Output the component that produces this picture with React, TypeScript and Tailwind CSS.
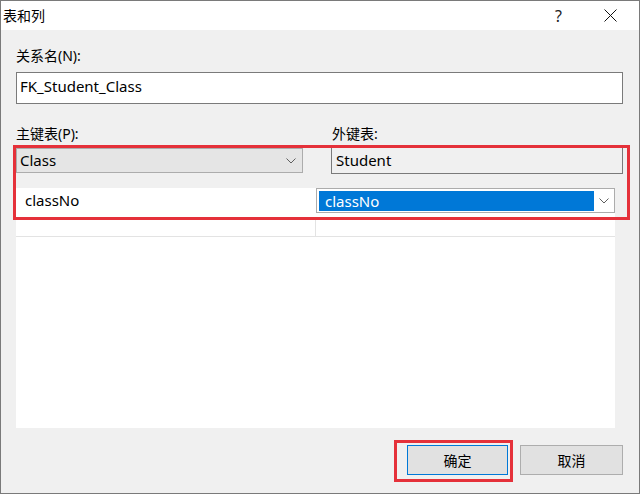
import React from "react";

const font = {
  fontFamily: '"Segoe UI", "Noto Sans", "Noto Sans CJK SC", sans-serif',
};

function Chevron() {
  return (
    <svg width="10" height="6" viewBox="0 0 10 6" fill="none">
      <path d="M0.5 0.5 L5 5 L9.5 0.5" stroke="#5f5f5f" strokeWidth="1" />
    </svg>
  );
}

export default function App() {
  return (
    <div
      style={font}
      className="relative w-[640px] h-[494px] flex flex-col border border-[#7a7a7a] bg-[#f0f0f0] text-[#000] overflow-hidden"
    >
      {/* title bar */}
      <div className="h-[29px] shrink-0 bg-white flex items-center pl-[2px] pr-[22px]">
        <span className="text-[14px] leading-none">表和列</span>
        <div className="ml-auto flex items-center gap-[42px]">
          <span className="text-[16px] leading-none text-[#222]">?</span>
          <svg width="13" height="13" viewBox="0 0 13 13">
            <path d="M0.5 0.5 L12.5 12.5 M12.5 0.5 L0.5 12.5" stroke="#111" strokeWidth="1" />
          </svg>
        </div>
      </div>

      {/* body */}
      <div className="flex-1 flex flex-col pl-[15px] pr-[16px] pt-[16px]">
        <div className="text-[14px] leading-[20px]">关系名(N):</div>
        <div className="mt-[6px] h-[32px] bg-white border border-[#7a7a7a] flex items-center pl-[3px] pb-[4px] text-[15px]">
          FK_Student_Class
        </div>

        <div className="mt-[20px] flex text-[14px] leading-[20px]">
          <div className="w-[316px]">主键表(P):</div>
          <div>外键表:</div>
        </div>

        <div className="mt-[3px] flex items-start">
          <div className="mt-[1px] w-[287px] h-[25px] bg-[#e5e5e5] border border-[#acacac] flex items-center pl-[3px] pr-[6px] text-[15px]">
            <span>Class</span>
            <span className="ml-auto">
              <Chevron />
            </span>
          </div>
          <div className="ml-[28px] flex-1 h-[27px] bg-[#f0f0f0] border border-[#7a7a7a] flex items-center pl-[4px] text-[15px]">
            Student
          </div>
        </div>

        {/* grid */}
        <div className="mt-[14px] w-[599px] h-[240px] bg-white flex flex-col">
          <div className="h-[31px] flex border-b border-[#e3e3e3]">
            <div className="w-[300px] flex items-start pt-[2px] pl-[9px] text-[15px] leading-[21px]">
              classNo
            </div>
            <div className="flex-1 h-[25px] border border-[#acacac] flex items-center bg-white">
              <div className="ml-[2px] w-[275px] h-[20px] bg-[#0078d7] text-white text-[15px] leading-[20px] pl-[6px]">
                classNo
              </div>
              <span className="ml-auto mr-[5px]">
                <Chevron />
              </span>
            </div>
          </div>
          <div className="h-[18px] flex border-b border-[#e3e3e3]">
            <div className="w-[300px] border-r border-[#e3e3e3]"></div>
            <div className="flex-1"></div>
          </div>
        </div>

        {/* buttons */}
        <div className="mt-[17px] flex justify-end gap-[12px] text-[14px]">
          <button className="w-[101px] h-[30px] bg-[#e1e1e1] border border-[#0078d7] flex items-center justify-center">
            确定
          </button>
          <button className="w-[103px] h-[30px] bg-[#e1e1e1] border border-[#adadad] flex items-center justify-center">
            取消
          </button>
        </div>
      </div>

      {/* red annotation boxes */}
      <div className="absolute left-[12px] top-[144px] w-[617px] h-[75px] border-[3px] border-[#e5313a] pointer-events-none"></div>
      <div className="absolute left-[393px] top-[439px] w-[119px] h-[42px] border-[3px] border-[#e5313a] pointer-events-none"></div>
    </div>
  );
}
